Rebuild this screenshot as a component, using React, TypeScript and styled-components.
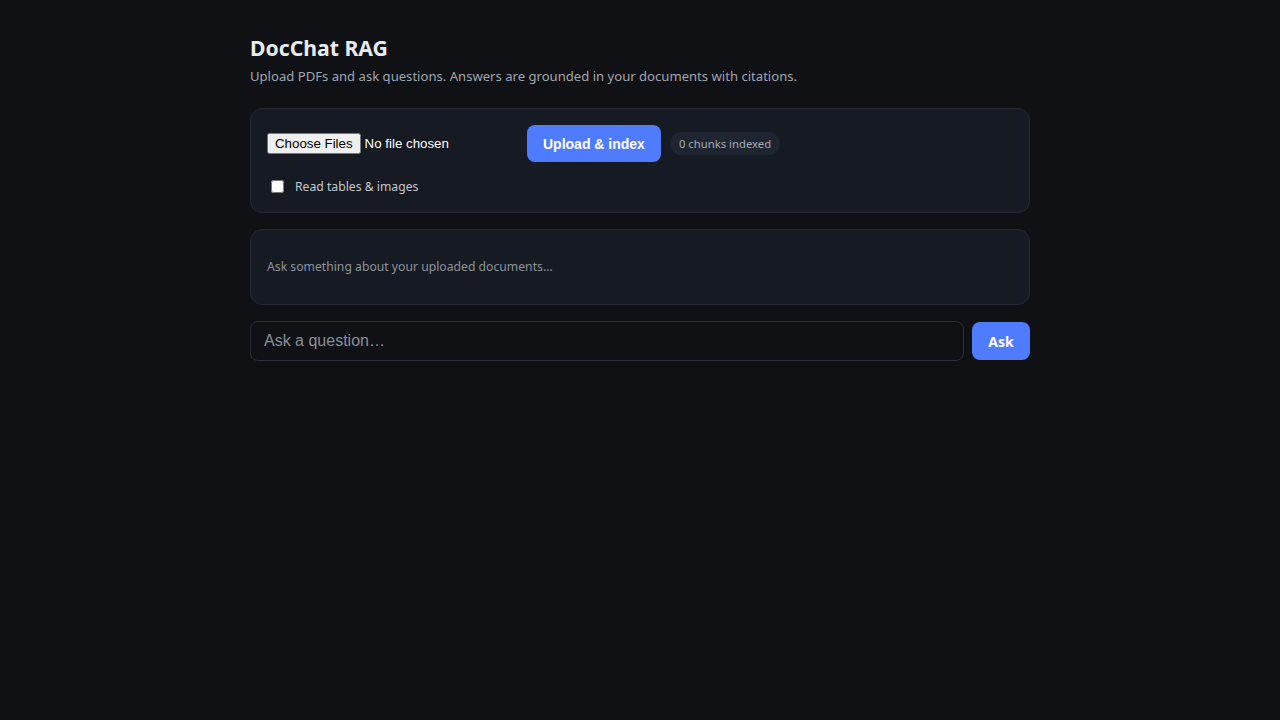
import React, { ReactElement } from 'react';
import styled, { createGlobalStyle } from 'styled-components';

const GlobalStyle = createGlobalStyle`
  html, body {
    margin: 0;
    padding: 0;
    background: #0f1115;
    color: #e6e8ec;
    font-family: 'Noto Sans', 'Open Sans', sans-serif;
  }
`;

const Page = styled.main`
  width: 780px;
  margin: 0 auto;
  padding-top: 32px;
  display: flex;
  flex-direction: column;
`;

const Title = styled.h1`
  margin: 0;
  font-size: 21.2px;
  font-weight: 700;
  line-height: 32px;
  color: #e8eaee;
`;

const Subtitle = styled.p`
  margin: 0 0 20px;
  font-size: 13.1px;
  line-height: 24px;
  color: #a0a6b0;
`;

const Card = styled.section<{ minHeight?: string }>`
  background: #161a22;
  border: 1px solid #232834;
  border-radius: 12px;
  padding: 16px 16px 17px;
  display: flex;
  flex-direction: column;
  justify-content: center;
  min-height: ${({ minHeight = 'auto' }) => minHeight};
  margin-bottom: 16px;
  box-sizing: border-box;
`;

const UploadRow = styled.div`
  display: flex;
  align-items: center;
  gap: 9px;
`;

const FileInput = styled.input`
  width: 251px;
  font-family: Arial, 'Liberation Sans', sans-serif;
  font-size: 13.3px;
  color: #ffffff;
`;

const PrimaryButton = styled.button<{ width?: string; height?: string }>`
  width: ${({ width = 'auto' }) => width};
  height: ${({ height = '37px' }) => height};
  padding: 0 16px;
  background: #4f7cff;
  color: #ffffff;
  border: none;
  border-radius: 8px;
  font-family: 'Liberation Sans', Arial, sans-serif;
  font-weight: 700;
  font-size: 14px;
  cursor: pointer;
`;

const Badge = styled.span`
  display: inline-flex;
  align-items: center;
  height: 23px;
  padding: 0 9px;
  border-radius: 999px;
  background: #1e2430;
  color: #a4aab4;
  font-size: 11.3px;
`;

const CheckRow = styled.label`
  display: flex;
  align-items: center;
  gap: 8px;
  margin-top: 16px;
  font-size: 12.2px;
  color: #c4c8d0;
`;

const Checkbox = styled.input`
  width: 13px;
  height: 13px;
  margin: 0 3px 0 4px;
`;

const EmptyText = styled.div`
  font-size: 12.2px;
  color: #8e939c;
`;

const AskRow = styled.form`
  display: flex;
  align-items: center;
  gap: 8px;
`;

const QuestionInput = styled.input`
  flex: 1;
  height: 40px;
  box-sizing: border-box;
  padding: 0 13px;
  background: #0f1115;
  border: 1px solid #2a303b;
  border-radius: 8px;
  color: #e6e8ec;
  font-family: Arial, 'Liberation Sans', sans-serif;
  font-size: 16px;
  outline: none;
  &::placeholder {
    color: #8a8f98;
  }
`;

const AskButton = styled(PrimaryButton)`
  font-family: 'Noto Sans', sans-serif;
  padding: 0;
`;

const App = (): ReactElement => (
  <>
    <GlobalStyle />
    <Page>
      <Title>DocChat RAG</Title>
      <Subtitle>
        Upload PDFs and ask questions. Answers are grounded in your documents with citations.
      </Subtitle>
      <Card>
        <UploadRow>
          <FileInput type="file" multiple accept="application/pdf" />
          <PrimaryButton type="button">Upload &amp; index</PrimaryButton>
          <Badge>0 chunks indexed</Badge>
        </UploadRow>
        <CheckRow>
          <Checkbox type="checkbox" />
          Read tables &amp; images
        </CheckRow>
      </Card>
      <Card minHeight="76px">
        <EmptyText>Ask something about your uploaded documents...</EmptyText>
      </Card>
      <AskRow onSubmit={(e) => e.preventDefault()}>
        <QuestionInput placeholder="Ask a question…" />
        <AskButton type="submit" width="58px" height="38px">
          Ask
        </AskButton>
      </AskRow>
    </Page>
  </>
);

export default App;
